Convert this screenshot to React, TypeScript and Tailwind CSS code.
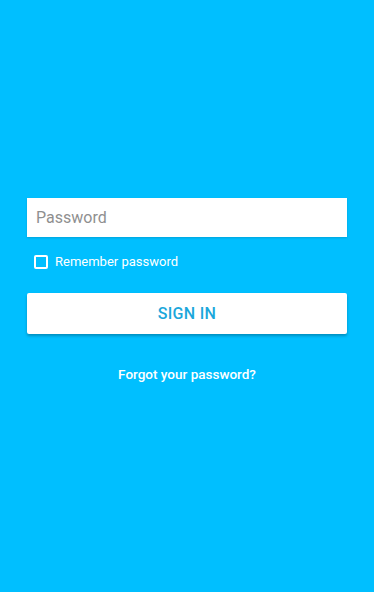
export default function App() {
  return (
    <div className="w-full h-[592px] bg-[#00bfff] px-[27px] pt-[198px] font-['Roboto',sans-serif]">
      <div className="h-[39px] bg-white flex items-center px-[9px] shadow-[0_1px_2px_rgba(0,0,0,0.15)]">
        <span className="text-[16px] text-[#8f8f8f]">Password</span>
      </div>

      <div className="flex items-center mt-[17px] pl-[7px] h-[16px]">
        <div className="w-[14px] h-[14px] border-2 border-white rounded-[2px]" />
        <span className="ml-[7px] text-[13px] text-white">Remember password</span>
      </div>

      <div className="mt-[23px] h-[41px] bg-white flex items-center justify-center shadow-[0_2px_3px_rgba(0,0,0,0.25)] rounded-[2px]">
        <span className="text-[16px] font-medium text-[#1ba7db] tracking-[0.3px]">SIGN IN</span>
      </div>

      <div className="mt-[30px] flex justify-center">
        <span className="text-[13.5px] font-medium text-white">Forgot your password?</span>
      </div>
    </div>
  );
}
